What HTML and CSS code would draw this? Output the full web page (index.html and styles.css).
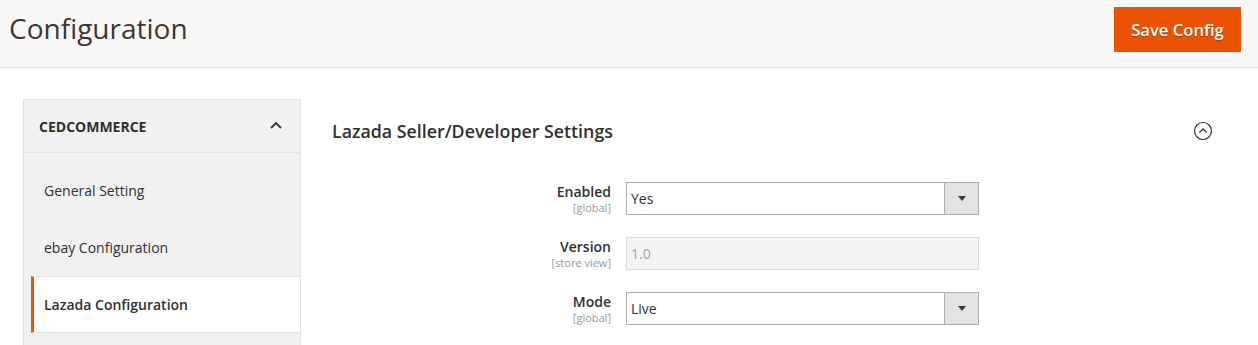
FILE: index.html
```html
<!DOCTYPE html>
<html lang="en">
  <head>
    <meta charset="UTF-8" />
    <meta name="viewport" content="width=device-width, initial-scale=1.0" />
    <title>Configuration</title>
    <link rel="stylesheet" href="styles.css">
  </head>

  <body>
    <header class="page-header">
      <h1 class="page-title">Configuration</h1>
      <button type="button" class="save-btn">Save Config</button>
    </header>

    <div class="page-content">
      <!-- left tabs -->
      <nav class="config-nav">
        <div class="nav-title">
          <span>CEDCOMMERCE</span>
          <svg class="nav-chevron" width="12" height="8" viewBox="0 0 12 8">
            <path d="M1 7 L6 2 L11 7" fill="none" stroke="#41362f" stroke-width="1.8" />
          </svg>
        </div>
        <ul class="nav-items">
          <li class="nav-item">General Setting</li>
          <li class="nav-item">ebay Configuration</li>
          <li class="nav-item active">Lazada Configuration</li>
          <li class="nav-item"></li>
        </ul>
      </nav>

      <main class="config-main">
        <div class="section-head">
          <h2>Lazada Seller/Developer Settings</h2>
          <svg class="collapse-icon" width="20" height="20" viewBox="0 0 20 20">
            <circle cx="10" cy="10" r="8.5" fill="none" stroke="#303030" stroke-width="1.2" />
            <path d="M6.3 11.6 L10 8 L13.7 11.6" fill="none" stroke="#303030" stroke-width="1.3" />
          </svg>
        </div>

        <div class="form-rows">
          <div class="form-row">
            <div class="field-label">
              <span class="label-text">Enabled</span>
              <span class="scope">[global]</span>
            </div>
            <div class="select-box">
              <span class="select-value">Yes</span>
              <span class="select-arrow"><i></i></span>
            </div>
          </div>

          <div class="form-row">
            <div class="field-label">
              <span class="label-text">Version</span>
              <span class="scope">[store view]</span>
            </div>
            <div class="text-input disabled">1.0</div>
          </div>

          <div class="form-row">
            <div class="field-label">
              <span class="label-text">Mode</span>
              <span class="scope">[global]</span>
            </div>
            <div class="select-box">
              <span class="select-value">Live</span>
              <span class="select-arrow"><i></i></span>
            </div>
          </div>
        </div>
      </main>
    </div>
  </body>
</html>
```

FILE: styles.css
```css
body {
  font-family: "Open Sans", Arial, sans-serif;
  background-color: #ffffff;
  color: #303030;
  margin: 0;
  overflow: hidden;
}

.page-header {
  background-color: #f8f8f8;
  border-bottom: 1px solid #e3e3e3;
  height: 67px;
  display: flex;
  justify-content: space-between;
  align-items: flex-start;
  padding: 0 17px 0 9px;
}

.page-title {
  margin: 0;
  padding-top: 9px;
  font-size: 28px;
  font-weight: 400;
  line-height: 38px;
  color: #41362f;
}

.save-btn {
  margin-top: 7px;
  width: 127px;
  height: 45px;
  background-color: #eb5202;
  color: #ffffff;
  border: none;
  font-family: "Open Sans", Arial, sans-serif;
  font-size: 16.6px;
  font-weight: 600;
  text-shadow: 0 1px 1px rgba(0, 0, 0, 0.3);
  cursor: pointer;
}

.page-content {
  display: flex;
  padding: 31px 0 0 23px;
  height: 246px;
  overflow: hidden;
}

.config-nav {
  width: 276px;
  background-color: #f1f1f1;
  border: 1px solid #e3e3e3;
  border-bottom: none;
  flex-shrink: 0;
  overflow: hidden;
}

.nav-title {
  height: 52px;
  border-bottom: 1px solid #e3e3e3;
  display: flex;
  justify-content: space-between;
  align-items: center;
  padding: 0 18px 0 15px;
  font-size: 14px;
  font-weight: 700;
  color: #303030;
}

.nav-chevron {
  margin-top: -2px;
}

.nav-items {
  list-style: none;
  margin: 0;
  padding: 9px 0 0 7px;
}

.nav-item {
  height: 57px;
  line-height: 57px;
  padding-left: 10px;
  border-left: 3px solid transparent;
  font-size: 14px;
  color: #303030;
  box-sizing: border-box;
}

.nav-item.active {
  background-color: #ffffff;
  border-left-color: #eb5202;
  border-top: 1px solid #e3e3e3;
  border-bottom: 1px solid #e3e3e3;
  line-height: 55px;
  font-weight: 600;
  margin-right: -1px;
}

.config-main {
  margin-left: 31px;
  width: 881px;
}

.section-head {
  display: flex;
  justify-content: space-between;
  align-items: center;
  padding-top: 21px;
}

.section-head h2 {
  margin: 0;
  font-size: 17.8px;
  font-weight: 600;
  line-height: 22px;
  color: #303030;
}

.form-rows {
  margin-top: 40px;
  display: flex;
  flex-direction: column;
  gap: 22px;
}

.form-row {
  display: grid;
  grid-template-columns: 279px 353px;
  column-gap: 15px;
}

.field-label {
  display: flex;
  flex-direction: column;
  align-items: flex-end;
  text-align: right;
}

.label-text {
  font-size: 14px;
  font-weight: 600;
  line-height: 19px;
  color: #303030;
}

.scope {
  font-size: 11px;
  line-height: 13px;
  color: #999999;
}

.select-box {
  height: 33px;
  border: 1px solid #adadad;
  box-sizing: border-box;
  display: flex;
  align-items: stretch;
  background-color: #ffffff;
}

.select-value {
  flex: 1;
  padding-left: 4px;
  font-size: 14px;
  line-height: 31px;
  color: #303030;
}

.select-arrow {
  width: 33px;
  border-left: 1px solid #adadad;
  background-color: #e3e3e3;
  display: flex;
  justify-content: center;
  align-items: center;
}

.select-arrow i {
  width: 0;
  height: 0;
  border-left: 4px solid transparent;
  border-right: 4px solid transparent;
  border-top: 5px solid #41362f;
}

.text-input {
  height: 33px;
  border: 1px solid #dadada;
  box-sizing: border-box;
  padding-left: 4px;
  font-size: 14px;
  line-height: 31px;
}

.text-input.disabled {
  background-color: #f4f4f4;
  color: #a3a3a3;
}
```
